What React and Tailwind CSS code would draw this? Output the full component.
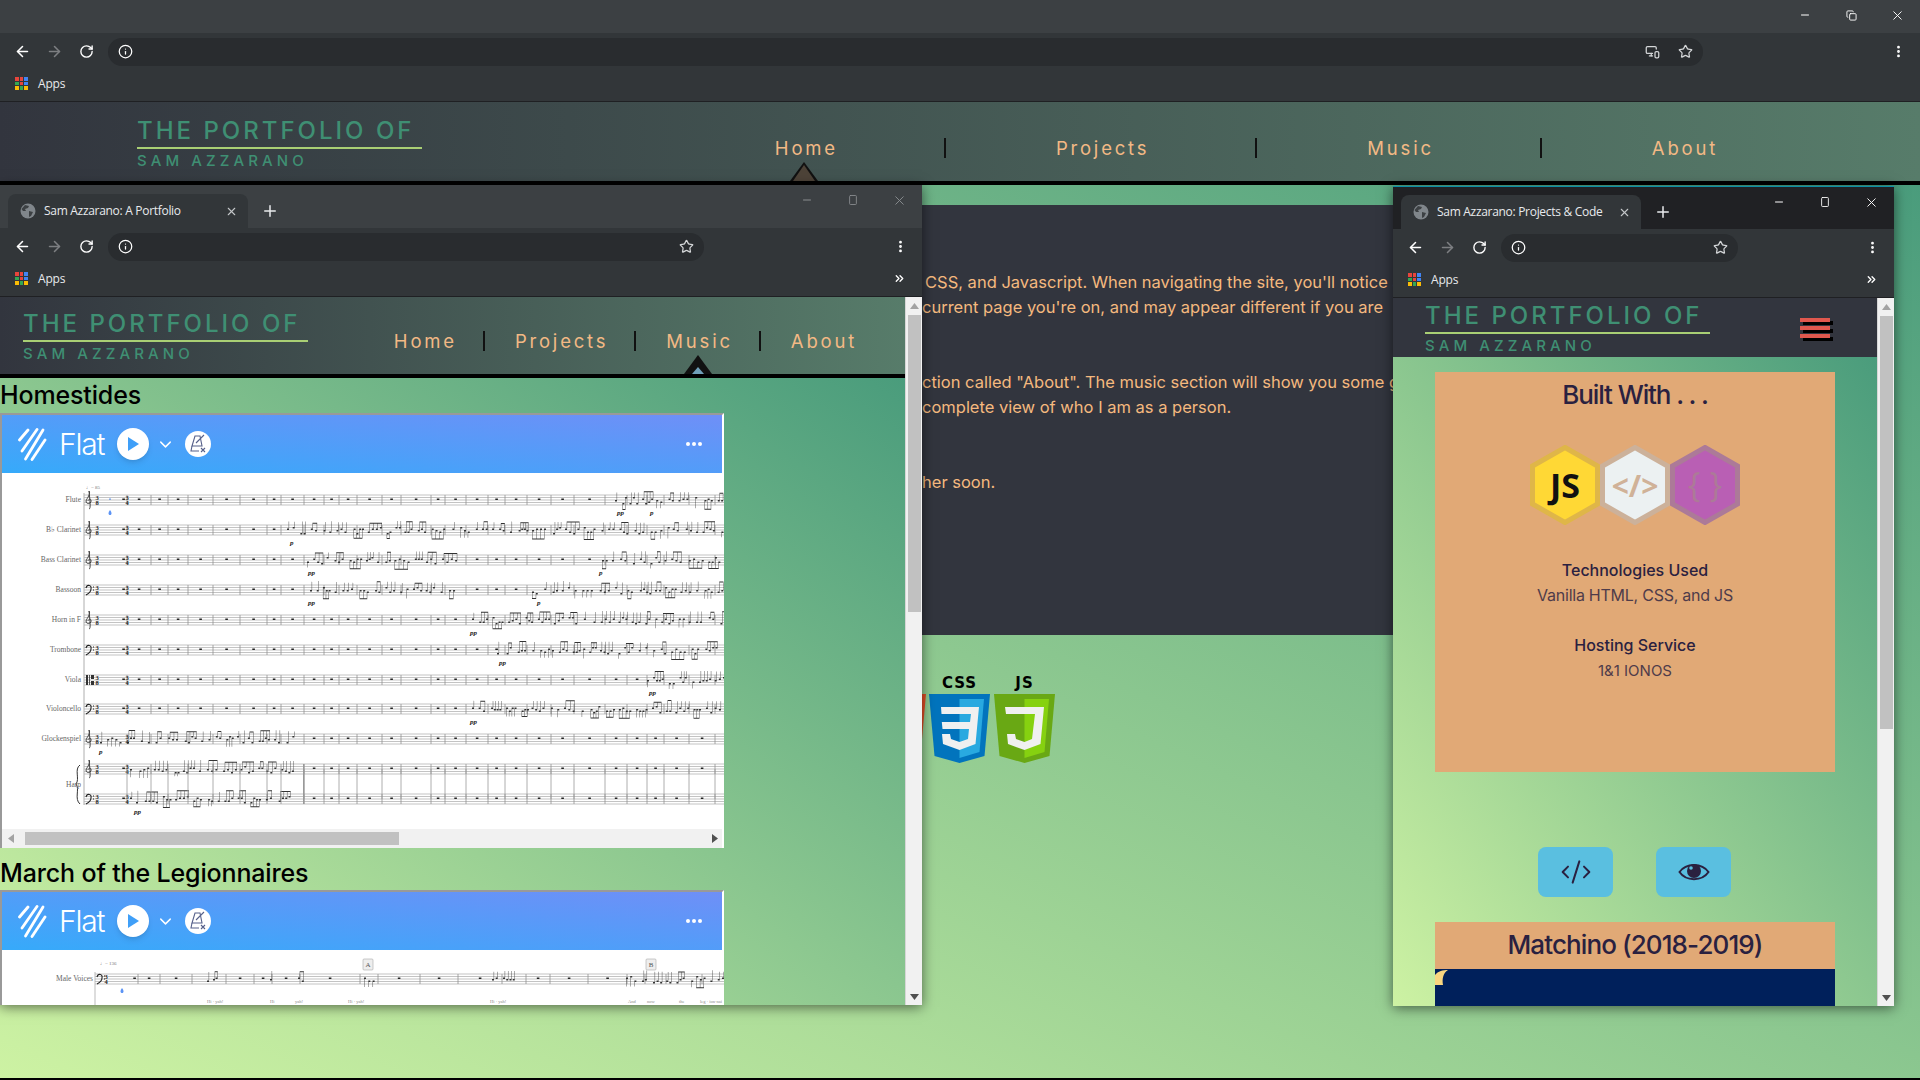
import React from 'react';
import {
  ArrowLeft, ArrowRight, RotateCw, Info, Star, EllipsisVertical, X, Minus, Square, Plus, Copy,
  ChevronsRight, MonitorSmartphone, ChevronDown, CodeXml,
} from 'lucide-react';

const appColors = [
  'bg-[#e8453c]', 'bg-[#e8453c]', 'bg-[#4285f4]',
  'bg-[#34a853]', 'bg-[#e8453c]', 'bg-[#4285f4]',
  'bg-[#fbbc05]', 'bg-[#34a853]', 'bg-[#fbbc05]',
];

const AppsIcon = () => (
  <div className="grid grid-cols-3 gap-px w-[13px] h-[13px]">
    {appColors.map((c, i) => <span key={i} className={c} />)}
  </div>
);

const Favicon = () => (
  <svg width="16" height="16" viewBox="0 0 16 16" className="shrink-0">
    <circle cx="8" cy="8" r="7.500" fill="#80868b" />
    <path d="M5 2 L9 3 L8 5 L5 6 L6 8 L3 8 L1.500 6 Z M9 8 L13 9 L11 13 L9 14 Z" fill="#3c4043" />
  </svg>
);

const Chrome = ({ title, strip, dim, omni, restore, cast, more = true }) => {
  const ctl = dim ? 'text-[#8a8d90]' : 'text-white';
  return (
    <>
      <div className={`flex items-end shrink-0 ${strip}`}>
        {title && (
          <>
            <div className="ml-2 w-60 h-[34px] bg-[#323639] rounded-t-lg flex items-center pl-3 font-['Open_Sans',sans-serif] text-xs text-[#e8eaed]">
              <Favicon />
              <span className="ml-2 flex-1 whitespace-nowrap tracking-[-0.3px]">{title}</span>
              <X size={13} className="mr-2.5 text-[#c4c7c9]" />
            </div>
            <Plus size={18} className="ml-[13px] mb-2 text-[#e8eaed]" />
          </>
        )}
        <div className={`ml-auto self-start flex h-[30px] ${ctl}`}>
          <div className="w-[46px] flex items-center justify-center"><Minus size={12} /></div>
          <div className="w-[46px] flex items-center justify-center">
            {restore ? <Copy size={11} /> : <Square size={12} className="scale-x-75" />}
          </div>
          <div className="w-[46px] flex items-center justify-center"><X size={15} strokeWidth={1.5} /></div>
        </div>
      </div>
      <div className="h-[35px] pt-0.5 bg-[#323639] flex items-center pl-1.5 shrink-0">
        <div className="w-8 flex justify-center"><ArrowLeft size={17} className="text-white" strokeWidth={2.2} /></div>
        <div className="w-8 flex justify-center"><ArrowRight size={17} className="text-[#7d7f82]" strokeWidth={2.2} /></div>
        <div className="w-8 flex justify-center"><RotateCw size={15} className="text-white" strokeWidth={2.2} /></div>
        <div className="ml-1.5 h-7 bg-[#292c2f] rounded-full flex items-center pl-2.5 pr-2.5" style={{ width: omni }}>
          <Info size={15} className="text-white" />
          {cast && <MonitorSmartphone size={15} className="ml-auto mr-[18px] text-[#d4d6d8]" />}
          <Star size={15} className={`text-[#d4d6d8] ${cast ? '' : 'ml-auto'}`} />
        </div>
        <div className="ml-auto mr-1.5 w-8 flex justify-center"><EllipsisVertical size={15} className="text-white" strokeWidth={2.5} /></div>
      </div>
      <div className="h-[34px] pb-0.5 bg-[#323639] border-b border-[#1f2023] flex items-center pl-[15px] shrink-0">
        <AppsIcon />
        <span className="ml-[10px] font-['Open_Sans',sans-serif] text-xs text-[#e8eaed] tracking-[-0.2px]">Apps</span>
        {more && <ChevronsRight size={13} className="ml-auto mr-4 text-white" strokeWidth={2.5} />}
      </div>
    </>
  );
};

const Title = ({ pt }) => (
  <div className={pt}>
    <div className="text-[24px] leading-[27px] font-medium tracking-[3px] text-[#3f8f73] whitespace-nowrap">THE PORTFOLIO OF</div>
    <div className="mt-[3px] h-0.5 w-[285px] bg-[#a9cf74]" />
    <div className="mt-[3px] text-[15px] leading-[17px] font-medium tracking-[4.1px] text-[#3f8f73] whitespace-nowrap">SAM AZZARANO</div>
  </div>
);

const Marker = ({ inner }) => (
  <svg width="30" height="20" viewBox="0 0 30 20" className="absolute left-1/2 -ml-[15px] -bottom-[23px]">
    <path d="M15 1 L29 20 H1 Z" fill="#111" />
    <path d={inner.d} fill={inner.fill} />
  </svg>
);

const NavLinks = ({ items, active, px, inner }) => (
  <div className="flex items-end pb-[23px]">
    {items.map((item, i) => (
      <div
        key={item}
        className={`relative h-5 leading-5 text-[18.5px] tracking-[2.8px] text-[#f2b985] ${px} ${i < items.length - 1 ? 'border-r-2 border-[#111]' : ''}`}
      >
        {item}
        {item === active && <Marker inner={inner} />}
      </div>
    ))}
  </div>
);

const links = ['Home', 'Projects', 'Music', 'About'];

const UpArrow = () => <svg width="9" height="6" viewBox="0 0 9 6"><path d="M4.5 0 L9 6 H0 Z" fill="#a3a3a3" /></svg>;
const DownArrow = () => <svg width="9" height="6" viewBox="0 0 9 6"><path d="M0 0 H9 L4.5 6 Z" fill="#505050" /></svg>;

const Scrollbar = ({ thumb }) => (
  <div className="w-[17px] shrink-0 bg-[#f1f1f1] flex flex-col items-center border-l border-[#d6d6d6]">
    <div className="h-[18px] flex items-center"><UpArrow /></div>
    <div className="w-[13px] bg-[#c1c1c1]" style={{ height: thumb }} />
    <div className="mt-auto h-[17px] flex items-center"><DownArrow /></div>
  </div>
);

// small seeded generator so the engraving stays the same every run
const makeRng = (seed) => () => {
  seed = (seed * 16807) % 2147483647;
  return (seed - 1) / 2147483646;
};

const barsA = [125, 149, 166, 186, 211, 238, 265, 279, 302, 322, 337, 355, 380, 399, 429, 443, 464, 486, 503, 525, 549, 572, 603, 625, 645, 662, 687, 713];

const rows = [
  { label: 'Flute', y: 27, clef: 'g', parts: [[613, 722]], dyn: [[615, 'pp'], [648, 'p']] },
  { label: 'B♭ Clarinet', y: 57, clef: 'g', parts: [[285, 722]], dyn: [[288, 'p']] },
  { label: 'Bass Clarinet', y: 87, clef: 'g', parts: [[305, 455], [600, 722]], dyn: [[306, 'pp'], [597, 'p']] },
  { label: 'Bassoon', y: 117, clef: 'f', parts: [[308, 455], [530, 722]], dyn: [[306, 'pp'], [535, 'p']] },
  { label: 'Horn in F', y: 147, clef: 'g', parts: [[470, 722]], dyn: [[468, 'pp']] },
  { label: 'Trombone', y: 177, clef: 'f', parts: [[495, 722]], dyn: [[497, 'pp']] },
  { label: 'Viola', y: 207, clef: 'c', parts: [[645, 722]], dyn: [[647, 'pp']] },
  { label: 'Violoncello', y: 236, clef: 'f', parts: [[470, 722]], dyn: [[468, 'pp']] },
  { label: 'Glockenspiel', y: 266, clef: 'g', parts: [[98, 295]], dyn: [[97, 'p']] },
  { label: 'Harp', y: 296, clef: 'g', parts: [[128, 295]], dyn: [], labelY: 312 },
  { label: '', y: 326, clef: 'f', parts: [[128, 295]], dyn: [[132, 'pp']] },
];

const notePath = (rng, from, to, cy) => {
  let d = '';
  let x = from;
  while (x < to) {
    const n = 1 + Math.floor(rng() * 4);
    const step = 2.600 + rng() * 1.800;
    const up = rng() > 0.3;
    const tip = up ? cy - 7 - rng() * 2 : cy + 7 + rng() * 2;
    const start = x;
    for (let i = 0; i < n && x < to; i++) {
      const ny = cy + Math.round(rng() * 4 - 2) * 1.500;
      const sx = up ? x + 1.700 : x;
      d += `M${x} ${ny} h2 v1.400 h-2 Z M${sx} ${Math.min(ny, tip)} h.4 V${Math.max(ny, tip)} h-.4 Z `;
      x += step;
    }
    if (n > 1 && rng() > 0.35) d += `M${up ? start + 1.700 : start} ${tip} H${x - step + (up ? 2.100 : 0.400)} v1 H${up ? start + 1.700 : start} Z `;
    x += 1.500 + rng() * 4;
  }
  return d;
};

const Staff = ({ x0, x1, y, bars, parts, seed }) => {
  const rng = makeRng(seed);
  const playing = (x) => parts.some(([a, b]) => x >= a && x <= b);
  const edges = [x0 + 36, ...bars];
  return (
    <g>
      {[-5, -2.5, 0, 2.5, 5].map((o) => <line key={o} x1={x0} x2={x1} y1={y + o} y2={y + o} stroke="#b4b4b4" strokeWidth="0.8" />)}
      {bars.map((b) => <line key={b} x1={b} x2={b} y1={y - 5} y2={y + 5} stroke="#8f8f8f" strokeWidth="0.8" />)}
      {edges.slice(0, -1).map((b, i) => {
        const mid = (b + edges[i + 1]) / 2;
        return playing(mid) ? null : <rect key={b} x={mid - 1.2} y={y - 1.5} width="2.6" height="1.5" fill="#222" />;
      })}
      {parts.map(([a, b]) => <path key={a} d={notePath(rng, a, b, y)} fill="#333" />)}
    </g>
  );
};

const Clef = ({ x, y, kind }) => (
  kind === 'g'
    ? <path d={`M${x + 3} ${y + 9} C${x + 5} ${y + 9} ${x + 4} ${y + 1} ${x + 3} ${y - 9} C${x + 5} ${y - 6} ${x + 1} ${y - 2} ${x} ${y + 1} C${x} ${y + 5} ${x + 6} ${y + 4} ${x + 5} ${y} C${x + 4} ${y - 2} ${x + 2} ${y} ${x + 2} ${y + 1}`} fill="none" stroke="#333" strokeWidth="0.9" />
    : kind === 'f'
      ? <path d={`M${x} ${y - 2} C${x + 1} ${y - 6} ${x + 6} ${y - 5} ${x + 5} ${y - 1} C${x + 5} ${y + 2} ${x + 2} ${y + 4} ${x} ${y + 5} M${x + 7} ${y - 3} h1 M${x + 7} ${y} h1`} fill="none" stroke="#222" strokeWidth="1.1" />
      : <path d={`M${x} ${y - 5} h2 v10 h-2 Z M${x + 3} ${y - 5} h.8 v10 h-.8 Z M${x + 5} ${y - 5} h3 v4 h-3 Z M${x + 5} ${y + 1} h3 v4 h-3 Z`} fill="#333" />
);

const Meter = ({ x, y, a = '3', b = '8' }) => (
  <g fontFamily="'Liberation Serif', serif" fontWeight="700" fontSize="6.5" fill="#222" textAnchor="middle">
    <text x={x} y={y - 0.4}>{a}</text>
    <text x={x} y={y + 5.2}>{b}</text>
  </g>
);

const ScoreOne = () => (
  <svg width="722" height="356" viewBox="0 0 722 356" className="block bg-white">
    <line x1="82" x2="82" y1="20" y2="332" stroke="#999" strokeWidth="0.8" />
    <path d="M78 292 C72 296 78 306 74 311 C78 316 72 326 78 331" fill="none" stroke="#333" strokeWidth="1" />
    <text x="84" y="16" fontFamily="'Liberation Serif', serif" fontSize="5" fill="#777">♩= 85</text>
    <path d="M108 37 c2 2.500 2 5 0 5 c-2 0 -2 -2.500 0 -5 Z" fill="#5b93f5" />
    <rect x="107" y="25.500" width="2" height="1.500" fill="#6fa1f7" />
    {rows.map((r, i) => (
      <g key={i}>
        <Staff x0={82} x1={722} y={r.y} bars={barsA} parts={r.parts} seed={i * 97 + 31} />
        {r.label && (
          <text x="79" y={(r.labelY || r.y) + 2} textAnchor="end" fontFamily="'Liberation Serif', serif" fontSize="7.500" fill="#666">{r.label}</text>
        )}
        <Clef x={84} y={r.y} kind={r.clef} />
        <Meter x={95} y={r.y} />
        <Meter x={125} y={r.y} a="3" b="4" />
        {r.dyn.map(([x, t]) => (
          <text key={x} x={x} y={r.y + 15} fontFamily="'Liberation Serif', serif" fontStyle="italic" fontWeight="700" fontSize="7" fill="#222">{t}</text>
        ))}
      </g>
    ))}
    {barsA.map((b) => <line key={b} x1={b} x2={b} y1="296" y2="326" stroke="#9a9a9a" strokeWidth="0.8" />)}
    <rect x="301" y="291" width="1.500" height="40" fill="#999" />
  </svg>
);

const barsB = [136, 158, 190, 224, 252, 270, 298, 358, 376, 418, 456, 500, 524, 548, 586, 625, 643, 664, 700];

const ScoreTwo = () => (
  <svg width="722" height="55" viewBox="0 0 722 55" className="block bg-white">
    <line x1="93" x2="93" y1="22" y2="55" stroke="#aaa" strokeWidth="0.8" />
    <text x="98" y="15" fontFamily="'Liberation Serif', serif" fontSize="5" fill="#777">♩= 136</text>
    <text x="91" y="31" textAnchor="end" fontFamily="'Liberation Serif', serif" fontSize="7.500" fill="#666">Male Voices</text>
    <Staff x0={93} x1={722} y={29} bars={barsB} parts={[[205, 215], [268, 272], [296, 302], [362, 372], [490, 512], [624, 722]]} seed={713} />
    <Clef x={95} y={29} kind="f" />
    <Meter x={104} y={29} a="3" b="4" />
    <path d="M120 38 c2 2.500 2 5 0 5 c-2 0 -2 -2.500 0 -5 Z" fill="#5b93f5" />
    <rect x="361" y="9" width="10" height="11" rx="1" fill="#eee" stroke="#aaa" strokeWidth="0.600" />
    <text x="366" y="17" textAnchor="middle" fontFamily="'Liberation Serif', serif" fontSize="7" fill="#555">A</text>
    <rect x="644" y="9" width="10" height="11" rx="1" fill="#eee" stroke="#aaa" strokeWidth="0.600" />
    <text x="649" y="17" textAnchor="middle" fontFamily="'Liberation Serif', serif" fontSize="7" fill="#555">B</text>
    <g fontFamily="'Liberation Serif', serif" fontSize="4.500" fill="#888">
      <text x="205" y="53">Hi · yah!</text>
      <text x="268" y="53">Hi</text>
      <text x="293" y="53">yah!</text>
      <text x="346" y="53">Hi · yah!</text>
      <text x="488" y="53">Hi · yah!</text>
      <text x="626" y="53">And</text>
      <text x="645" y="53">now</text>
      <text x="677" y="53">the</text>
      <text x="698" y="53">leg · ion·nai</text>
    </g>
  </svg>
);

const FlatHeader = () => (
  <div className="h-[58px] bg-linear-to-tr/srgb from-[#36aafa] to-[#6f8ff7] flex items-center pl-4 pr-5 shrink-0">
    <svg width="29" height="33" viewBox="0 0 29 33" fill="none" stroke="white" strokeWidth="2.800" strokeLinecap="round">
      <path d="M10 2 L1.500 12" />
      <path d="M19 1.500 L4 23" />
      <path d="M25 2 L7.500 31" />
      <path d="M27 12 L14 31.500" />
    </svg>
    <span className="ml-[12px] w-[46px] text-[30px] leading-none font-light tracking-[-1.2px] text-white">Flat</span>
    <div className="ml-[12px] w-8 h-8 rounded-full bg-white shadow-md flex items-center justify-center">
      <svg width="12" height="14" viewBox="0 0 12 14"><path d="M1 0 L12 7 L1 14 Z" fill="#3f9ff8" /></svg>
    </div>
    <ChevronDown size={19} className="ml-[7px] text-white" strokeWidth={1.8} />
    <div className="ml-[10px] w-[26px] h-[26px] rounded-full bg-white flex items-center justify-center">
      <svg width="18" height="20" viewBox="0 0 18 20" fill="none" stroke="#56608a" strokeWidth="1.100">
        <path d="M6 2 H11 L13 12 H3 Z" />
        <path d="M3 12 L2 17 H10" />
        <path d="M7 9 L15 1" />
        <path d="M12 14 L16 18 M16 14 L12 18" />
      </svg>
    </div>
    <div className="ml-auto flex gap-0.5">
      <span className="w-1 h-1 rounded-full bg-white" />
      <span className="w-1 h-1 rounded-full bg-white" />
      <span className="w-1 h-1 rounded-full bg-white" />
    </div>
  </div>
);

const FlatEmbed = ({ children }) => (
  <div className="w-[724px] border-t-2 border-l-2 border-[#999] border-r-2 border-r-white">
    <FlatHeader />
    {children}
  </div>
);

const Hexagon = ({ fill, edge, children }) => (
  <svg width="70" height="80" viewBox="0 0 70 80" className="block">
    <path d="M35 2.500 L67.500 21 V59 L35 77.500 L2.500 59 V21 Z" fill={fill} stroke={edge} strokeWidth="5" />
    {children}
  </svg>
);

const Shield = ({ outer, inner, children }) => (
  <svg width="61" height="69" viewBox="0 0 61 69" className="block">
    <path d="M0 0 H61 L55.500 62 L30.500 69 L5.500 62 Z" fill={outer} />
    <path d="M30.500 5 H55 L50.500 58 L30.500 64 Z" fill={inner} />
    {children}
  </svg>
);

const WindowOne = () => (
  <div className="absolute left-0 top-[185px] w-[922px] h-[820px] flex flex-col shadow-[0_2px_12px_rgba(0,0,0,0.55)] overflow-hidden">
    <Chrome title="Sam Azzarano: A Portfolio" strip="bg-[#3c4043] h-[43px]" dim omni={596} />
    <div className="flex-1 flex min-h-0">
      <div className="flex-1 flex flex-col min-w-0 overflow-hidden">
        <div className="h-[81px] shrink-0 flex justify-between border-b-4 border-black bg-linear-to-r/srgb from-[#32353e] to-[#577c6a] pl-[23px] pr-[48px]">
          <Title pt="pt-[13px]" />
          <NavLinks items={links} active="Music" px="pl-[30px] pr-[26px] first:pl-0 last:pr-0" inner={{ d: 'M15 13 L21 20 H9 Z', fill: '#6f9fb8' }} />
        </div>
        <div className="flex-1 min-h-0 bg-linear-to-tr/srgb from-[#cdf2a3] to-[#4a9c7c] overflow-hidden">
          <h2 className="h-[35px] leading-[34px] text-[25px] font-medium text-black tracking-[-0.15px]">Homestides</h2>
          <FlatEmbed>
            <ScoreOne />
            <div className="h-[19px] bg-[#f1f1f1] flex items-center pl-1.5 pr-1">
              <svg width="6" height="9" viewBox="0 0 6 9"><path d="M6 0 V9 L0 4.500 Z" fill="#a3a3a3" /></svg>
              <div className="ml-[11px] w-[374px] h-[13px] bg-[#c1c1c1]" />
              <svg width="6" height="9" viewBox="0 0 6 9" className="ml-auto"><path d="M0 0 V9 L6 4.500 Z" fill="#505050" /></svg>
            </div>
          </FlatEmbed>
          <h2 className="h-[42px] pt-2 leading-[34px] text-[25px] font-medium text-black tracking-[-0.15px]">March of the Legionnaires</h2>
          <FlatEmbed>
            <ScoreTwo />
          </FlatEmbed>
        </div>
      </div>
      <Scrollbar thumb={297} />
    </div>
  </div>
);

const WindowTwo = () => (
  <div className="absolute left-[1393px] top-[186px] w-[501px] h-[820px] flex flex-col border-t border-[#0a8fa8] shadow-[0_2px_12px_rgba(0,0,0,0.55)] overflow-hidden">
    <Chrome title="Sam Azzarano: Projects & Code" strip="bg-[#202124] h-[42px]" omni={237} />
    <div className="flex-1 flex min-h-0">
      <div className="flex-1 flex flex-col min-w-0 overflow-hidden">
        <div className="h-[59px] shrink-0 bg-[#32353e] flex justify-between items-center pl-8 pr-[47px]">
          <Title pt="pt-1 self-start" />
          <div className="flex flex-col gap-1">
            <span className="w-[30px] h-1 bg-[#e0584e] shadow-[3px_3px_0_#000]" />
            <span className="w-[30px] h-1 bg-[#e0584e] shadow-[3px_3px_0_#000]" />
            <span className="w-[30px] h-1 bg-[#e0584e] shadow-[3px_3px_0_#000]" />
          </div>
        </div>
        <div className="flex-1 min-h-0 bg-linear-to-tr/srgb from-[#cdf2a3] to-[#4a9c7c] overflow-hidden pt-[15px] text-[#2a2140]">
          <div className="mx-auto w-[400px] h-[400px] bg-[#e1a976] flex flex-col items-center text-center">
            <h3 className="mt-1 text-[26px] leading-[38px] font-medium tracking-[-1.1px]">Built With . . .</h3>
            <div className="mt-[31px] flex">
              <Hexagon fill="#ffd835" edge="#dfb648">
                <text x="35" y="53" textAnchor="middle" fontFamily="'Open Sans', sans-serif" fontWeight="700" fontSize="34" fill="#111">JS</text>
              </Hexagon>
              <Hexagon fill="#ecf1f2" edge="#ccb19a">
                <text x="35" y="52" textAnchor="middle" fontFamily="'Open Sans', sans-serif" fontWeight="700" fontSize="30" fill="#d0b298">&lt;/&gt;</text>
              </Hexagon>
              <Hexagon fill="#b95fb4" edge="#ac7a98">
                <text x="35" y="52" textAnchor="middle" fontFamily="'Open Sans', sans-serif" fontSize="34" fill="#ac7a98">{'{ }'}</text>
              </Hexagon>
            </div>
            <div className="mt-[33px] text-[16px] leading-[25px] font-medium">Technologies Used</div>
            <div className="text-[16px] leading-[25px] tracking-[-0.25px] opacity-80">Vanilla HTML, CSS, and JS</div>
            <div className="mt-[25px] text-[16px] leading-[25px] font-medium">Hosting Service</div>
            <div className="text-[15px] leading-[25px] opacity-80">1&amp;1 IONOS</div>
          </div>
          <div className="mt-[75px] flex justify-center gap-[43px] pr-px">
            <div className="w-[75px] h-[50px] bg-[#5abfe0] rounded-lg flex items-center justify-center">
              <CodeXml size={32} strokeWidth={1.5} />
            </div>
            <div className="w-[75px] h-[50px] bg-[#5abfe0] rounded-lg flex items-center justify-center">
              <svg width="32" height="22" viewBox="0 0 32 22">
                <path d="M1.500 11 C8 1.500 24 1.500 30.500 11 C24 20.500 8 20.500 1.500 11 Z" fill="none" stroke="currentColor" strokeWidth="2" />
                <circle cx="16" cy="10" r="7" fill="currentColor" />
                <circle cx="13" cy="7" r="1.800" fill="#5abfe0" />
              </svg>
            </div>
          </div>
          <div className="mt-[25px] mx-auto w-[400px] h-[47px] bg-[#e1a976] text-center text-[26px] leading-[46px] font-medium tracking-[-0.9px]">Matchino (2018-2019)</div>
          <div className="mx-auto w-[400px] h-10 bg-[#00205b] overflow-hidden">
            <svg width="14" height="16" viewBox="0 0 14 16"><path d="M0 6 C3 2 8 1 13 1 C8 4 7 10 8 16 H0 Z" fill="#f8d680" /></svg>
          </div>
        </div>
      </div>
      <Scrollbar thumb={413} />
    </div>
  </div>
);

const App = () => (
  <div className="relative w-full h-[1080px] overflow-hidden font-[Inter,sans-serif]">
    <div className="h-[1080px] flex flex-col border-b-2 border-black">
      <Chrome strip="bg-[#3c4043] h-[33px]" omni={1595} restore cast more={false} />
      <div className="h-[83px] shrink-0 flex justify-between border-b-4 border-black bg-linear-to-r/srgb from-[#32353e] to-[#577c6a] pl-[137px] pr-[202px]">
        <Title pt="pt-[15px]" />
        <NavLinks items={links} active="Home" px="pl-[110px] pr-[106px] last:pr-0" inner={{ d: 'M15 4 L26 20 H4 Z', fill: '#4d4338' }} />
      </div>
      <div className="flex-1 min-h-0 bg-linear-to-tr/srgb from-[#cdf2a3] to-[#4a9c7c] pt-5 overflow-hidden">
        <div className="mx-[100px] h-[430px] bg-[#32353e] pt-[65px] text-[16.5px] leading-[25px] text-[#f5b97f] whitespace-nowrap">
          <p className="pl-[825px]">CSS, and Javascript. When navigating the site, you'll notice a</p>
          <p className="pl-[822px]">current page you're on, and may appear different if you are</p>
          <p className="pl-[822px] mt-[50px]">ction called "About". The music section will show you some g</p>
          <p className="pl-[822px]">complete view of who I am as a person.</p>
          <p className="pl-[822px] mt-[50px]">her soon.</p>
        </div>
        <div className="mt-[42px] pl-[865px] flex gap-[3px]">
          <div className="flex flex-col items-center">
            <div className="h-[17px]" />
            <Shield outer="#e44d26" inner="#f16529" />
          </div>
          <div className="flex flex-col items-center">
            <div className="h-[17px] leading-3 text-[15px] tracking-[1px] font-black font-['DejaVu_Sans',sans-serif] text-black">CSS</div>
            <Shield outer="#0274bd" inner="#29a9e0">
              <path d="M12 13 H50 L46.500 50 L30.500 56 L14 50 L13 40 H21 L22 45 L30.500 48 L39 45 L40 35 H13.500 L12.800 28 H41 L42 20 H12.500 Z" fill="#f0f0f0" />
            </Shield>
          </div>
          <div className="flex flex-col items-center ml-px">
            <div className="h-[17px] leading-3 text-[15px] tracking-[1px] font-black font-['DejaVu_Sans',sans-serif] text-black">JS</div>
            <Shield outer="#69a814" inner="#86d110">
              <path d="M11 13 H50 L46.500 50 L30.500 56 L14 50 L13 40 H21 L22 45 L30.500 48 L38 45 L41 20 H12 Z" fill="#f0f0f0" />
            </Shield>
          </div>
        </div>
      </div>
    </div>
    <WindowOne />
    <WindowTwo />
  </div>
);

export default App;
